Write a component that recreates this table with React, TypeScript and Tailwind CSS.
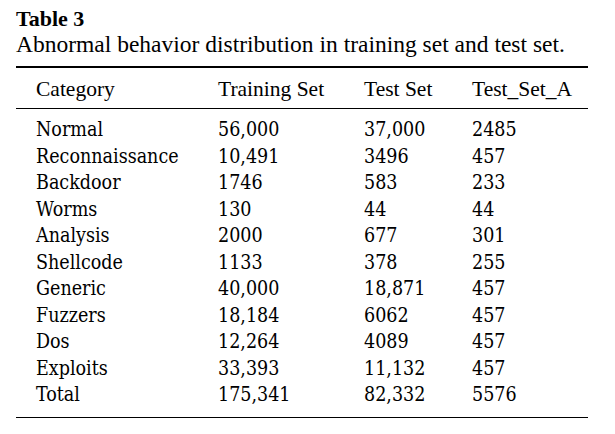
const rows: [string, string, string, string][] = [
  ['Normal', '56,000', '37,000', '2485'],
  ['Reconnaissance', '10,491', '3496', '457'],
  ['Backdoor', '1746', '583', '233'],
  ['Worms', '130', '44', '44'],
  ['Analysis', '2000', '677', '301'],
  ['Shellcode', '1133', '378', '255'],
  ['Generic', '40,000', '18,871', '457'],
  ['Fuzzers', '18,184', '6062', '457'],
  ['Dos', '12,264', '4089', '457'],
  ['Exploits', '33,393', '11,132', '457'],
  ['Total', '175,341', '82,332', '5576'],
]

const cols = 'grid grid-cols-[182px_146px_108px_1fr] pl-[20px]'

export default function App() {
  return (
    <div className="h-[434px] w-[615px] bg-white pl-[16px] pt-[7px] text-black">
      <div className="w-[572px]">
        <h2 className="font-['Liberation_Serif',serif] text-[22px] leading-[24px] font-bold">
          Table 3
        </h2>
        <p className="font-['Liberation_Serif',serif] text-[23.5px] leading-[26px]">
          Abnormal behavior distribution in training set and test set.
        </p>
        <div className="mt-[9px] h-[1.5px] bg-black" />
        <div
          className={`${cols} pt-[9px] pb-[7px] font-['Liberation_Serif',serif] text-[21.5px] leading-[24px]`}
        >
          <span>Category</span>
          <span>Training Set</span>
          <span>Test Set</span>
          <span>Test_Set_A</span>
        </div>
        <div className="h-[1.5px] bg-black" />
        <div className="pt-[8px] pb-[8px] font-['DejaVu_Serif_Condensed','DejaVu_Serif',serif] text-[19.5px] leading-[26.5px]">
          {rows.map((r) => (
            <div key={r[0]} className={cols}>
              {r.map((c, i) => (
                <span key={i}>{c}</span>
              ))}
            </div>
          ))}
        </div>
        <div className="h-[1.5px] bg-black" />
      </div>
    </div>
  )
}
